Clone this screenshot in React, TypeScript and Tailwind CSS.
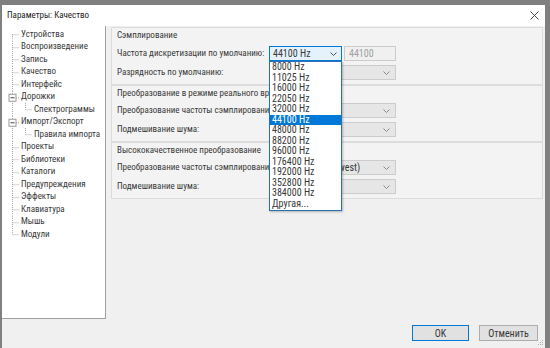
const font = { fontFamily: '"Roboto Condensed", "Liberation Sans", sans-serif' };

type TreeItem = { label: string; kind?: "first" | "last"; expander?: boolean; child?: boolean };

const tree: TreeItem[] = [
  { label: "Устройства", kind: "first" },
  { label: "Воспроизведение" },
  { label: "Запись" },
  { label: "Качество" },
  { label: "Интерфейс" },
  { label: "Дорожки", expander: true },
  { label: "Спектрограммы", child: true },
  { label: "Импорт/Экспорт", expander: true },
  { label: "Правила импорта", child: true },
  { label: "Проекты" },
  { label: "Библиотеки" },
  { label: "Каталоги" },
  { label: "Предупреждения" },
  { label: "Эффекты" },
  { label: "Клавиатура" },
  { label: "Мышь" },
  { label: "Модули", kind: "last" },
];

const rates = [
  "8000 Hz",
  "11025 Hz",
  "16000 Hz",
  "22050 Hz",
  "32000 Hz",
  "44100 Hz",
  "48000 Hz",
  "88200 Hz",
  "96000 Hz",
  "176400 Hz",
  "192000 Hz",
  "352800 Hz",
  "384000 Hz",
  "Другая...",
];

function Connector({ item }: { item: TreeItem }) {
  const h = 12.5;
  const m = 6.25;
  const dot = { stroke: "#a8a8a8", strokeWidth: 1, strokeDasharray: "1 1" };
  return (
    <svg width={item.child ? 31 : 18} height={h} className="shrink-0">
      <line x1={10.5} x2={10.5} y1={item.kind === "first" ? m : 0} y2={item.kind === "last" ? m : h} {...dot} />
      {item.expander ? (
        <>
          <line x1={14} x2={17} y1={m + 0.5} y2={m + 0.5} {...dot} />
          <line x1={23.5} x2={23.5} y1={m + 4} y2={h} {...dot} />
          <rect x={7} y={m - 3} width={7} height={7} fill="#fff" stroke="#9a9a9a" strokeWidth={1} />
          <line x1={8.5} x2={12.5} y1={m + 0.5} y2={m + 0.5} stroke="#444" strokeWidth={1} />
        </>
      ) : item.child ? (
        <>
          <line x1={23.5} x2={23.5} y1={0} y2={m} {...dot} />
          <line x1={23.5} x2={30} y1={m + 0.5} y2={m + 0.5} {...dot} />
        </>
      ) : (
        <line x1={10.5} x2={17} y1={m + 0.5} y2={m + 0.5} {...dot} />
      )}
    </svg>
  );
}

function Chevron({ color = "#8a8a8a" }: { color?: string }) {
  return (
    <svg width="7" height="4" viewBox="0 0 7 4" className="shrink-0">
      <path d="M0.5 0.5 L3.5 3.5 L6.5 0.5" fill="none" stroke={color} strokeWidth="1" />
    </svg>
  );
}

function Combo({ text = "" }: { text?: string }) {
  return (
    <div className="w-[127px] h-[15px] border border-[#cccccc] bg-[#e6e6e6] flex items-center pl-[3px] pr-[5px] overflow-hidden">
      <span className="flex-1 whitespace-nowrap overflow-hidden text-[10px]">{text}</span>
      <Chevron />
    </div>
  );
}

function Group({ title, children }: { title: string; children: React.ReactNode }) {
  return (
    <div className="border border-[#dcdcdc] bg-[#f3f3f3] pl-[5px] pb-[4px] flex flex-col gap-[4px]">
      <div className="h-[13px] leading-[13px] pt-[1px] whitespace-nowrap overflow-hidden">{title}</div>
      {children}
    </div>
  );
}

function Row({ label, children }: { label: string; children: React.ReactNode }) {
  return (
    <div className="flex items-center h-[15px]">
      <div className="w-[152px] shrink-0 whitespace-nowrap">{label}</div>
      {children}
    </div>
  );
}

export default function App() {
  return (
    <div className="w-[550px] h-[348px] bg-[#808080] pt-[5px] pl-[2px] pr-[5px] overflow-hidden text-[9px] font-normal text-[#383838]" style={font}>
      <div className="h-full flex flex-col">
        {/* Title bar */}
        <div className="h-[21px] shrink-0 bg-white flex items-center pl-[5px] pr-[6px]">
          <span className="flex-1 text-[#222]">Параметры: Качество</span>
          <svg width="9" height="9" viewBox="0 0 9 9">
            <path d="M0.5 0.5 L8.5 8.5 M8.5 0.5 L0.5 8.5" stroke="#333" strokeWidth="0.9" />
          </svg>
        </div>

        <div className="flex-1 bg-[#f0f0f0] flex flex-col">
          <div className="flex h-[293px]">
            {/* Tree */}
            <div className="w-[104px] shrink-0 bg-white border-r border-b border-[#a0a0a0] pt-[2px]">
              {tree.map((t) => (
                <div key={t.label} className="flex items-center h-[12.5px] whitespace-nowrap">
                  <Connector item={t} />
                  <span className="pl-[1px] leading-none">{t.label}</span>
                </div>
              ))}
            </div>

            {/* Settings */}
            <div className="flex-1 pl-[5px] pr-[2px] pt-[1px] flex flex-col">
              <Group title="Сэмплирование">
                <div className="flex flex-col gap-[4px] mt-[1px]">
                  <Row label="Частота дискретизации по умолчанию:">
                    <div className="relative">
                      <div className="w-[73px] h-[15px] border border-[#0078d7] bg-[#e5f1fb] flex items-center pl-[3px] pr-[4px]">
                        <span className="flex-1 text-[10px]">44100 Hz</span>
                        <Chevron color="#555" />
                      </div>
                      <div className="absolute left-0 top-full w-[73px] bg-white border border-[#2a6fba] shadow-[1px_1px_2px_rgba(0,0,0,0.25)] z-10 pb-[1px] text-[10px]">
                        {rates.map((r) => (
                          <div
                            key={r}
                            className={
                              r === "44100 Hz"
                                ? "h-[10.5px] leading-[10.5px] pl-[2px] bg-[#0078d7] text-white"
                                : "h-[10.5px] leading-[10.5px] pl-[2px]"
                            }
                          >
                            {r}
                          </div>
                        ))}
                      </div>
                    </div>
                    <div className="ml-[2px] w-[52px] h-[15px] border border-[#cccccc] bg-[#f0f0f0] flex items-center pl-[4px] text-[10px] text-[#a0a0a0]">
                      44100
                    </div>
                  </Row>
                  <Row label="Разрядность по умолчанию:">
                    <Combo text="32-bit float" />
                  </Row>
                </div>
              </Group>

              <Group title="Преобразование в режиме реального времени">
                <div className="flex flex-col gap-[4px]">
                  <Row label="Преобразование частоты сэмплирования:">
                    <Combo text="Medium Quality" />
                  </Row>
                  <Row label="Подмешивание шума:">
                    <Combo text="Нет" />
                  </Row>
                </div>
              </Group>

              <Group title="Высококачественное преобразование">
                <div className="flex flex-col gap-[4px]">
                  <Row label="Преобразование частоты сэмплирования:">
                    <Combo text="Best Quality (Slowest)" />
                  </Row>
                  <Row label="Подмешивание шума:">
                    <Combo text="Треугольная" />
                  </Row>
                </div>
              </Group>
            </div>
          </div>

          {/* Buttons */}
          <div className="flex-1 flex justify-end items-start pt-[6px] pr-[7px] gap-[10px] relative">
            <button className="w-[57px] h-[16px] border border-[#0078d7] bg-[#e1e1e1] flex items-center justify-center text-[10px]">OK</button>
            <button className="w-[59px] h-[16px] border border-[#adadad] bg-[#e1e1e1] flex items-center justify-center text-[10px]">Отменить</button>
            <svg width="6" height="6" viewBox="0 0 6 6" className="absolute right-[1px] bottom-[2px]">
              <rect x="4" y="0" width="1" height="1" fill="#b0b0b0" />
              <rect x="2" y="2" width="1" height="1" fill="#b0b0b0" />
              <rect x="4" y="2" width="1" height="1" fill="#b0b0b0" />
              <rect x="0" y="4" width="1" height="1" fill="#b0b0b0" />
              <rect x="2" y="4" width="1" height="1" fill="#b0b0b0" />
              <rect x="4" y="4" width="1" height="1" fill="#b0b0b0" />
            </svg>
          </div>
        </div>
      </div>
    </div>
  );
}
